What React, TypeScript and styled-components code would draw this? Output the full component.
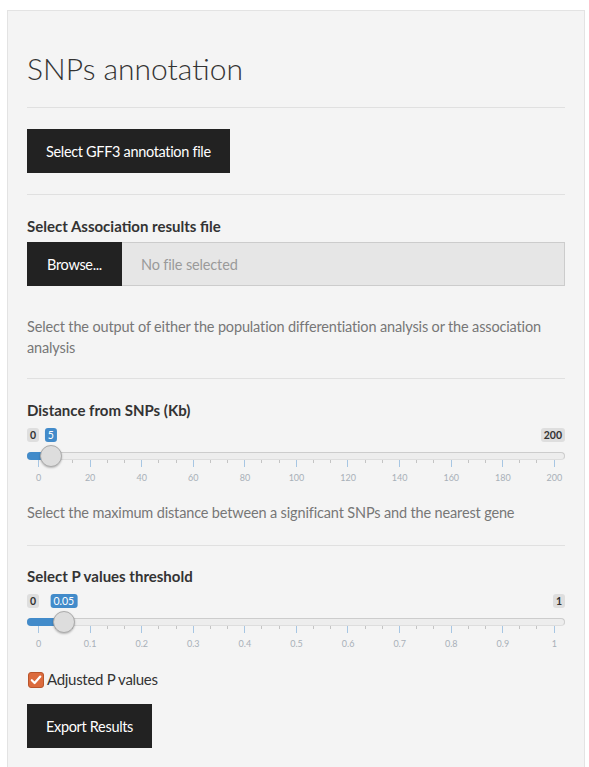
import React from "react";
import styled, { createGlobalStyle } from "styled-components";

const GlobalStyle = createGlobalStyle`
  html, body { margin: 0; padding: 0; background: #ffffff; }
  body { font-family: Lato, "Noto Sans", sans-serif; color: #333333; }
  * { box-sizing: border-box; }
`;

const Page = styled.div`
  padding: 10px 0 0 7px;
  width: 589px;
`;

const Well = styled.div`
  width: 578px;
  min-height: 780px;
  background: #f4f4f4;
  border: 1px solid #e3e3e3;
  padding: 19px;
  display: flex;
  flex-direction: column;
`;

const Title = styled.h2`
  margin: 21px 0 22px 0;
  font-size: 30px;
  line-height: 34px;
  font-weight: 300;
  color: #333333;
`;

const Divider = styled.hr`
  margin: 0;
  border: 0;
  border-top: 1px solid #e0e0e0;
  height: 0;
`;

const Section = styled.div<{ $top: number; $bottom: number }>`
  display: flex;
  flex-direction: column;
  align-items: flex-start;
  padding-top: ${(p) => p.$top}px;
  padding-bottom: ${(p) => p.$bottom}px;
`;

const DarkButton = styled.button`
  display: inline-flex;
  align-items: center;
  justify-content: center;
  height: 44px;
  padding: 0 19px;
  border: 0;
  border-radius: 0;
  background: #222222;
  color: #ffffff;
  font-family: Lato, "Noto Sans", sans-serif;
  font-size: 14.5px;
  letter-spacing: -0.33px;
  cursor: pointer;
`;

const Label = styled.div<{ $gap: number }>`
  align-self: stretch;
  font-size: 15px;
  font-weight: 700;
  line-height: 21px;
  color: #333333;
  margin-bottom: ${(p) => p.$gap}px;
`;

const FileRow = styled.div`
  align-self: stretch;
  display: flex;
  height: 44px;
`;

const BrowseButton = styled(DarkButton)`
  width: 95px;
  padding: 0;
  flex: none;
`;

const FileField = styled.div`
  flex: 1;
  display: flex;
  align-items: center;
  padding-left: 19px;
  background: #e6e6e6;
  border: 1px solid #cccccc;
  border-left: 0;
  color: #9a9a9a;
  font-size: 14.5px;
  letter-spacing: -0.15px;
`;

const Help = styled.div<{ $top: number }>`
  align-self: stretch;
  margin-top: ${(p) => p.$top}px;
  font-size: 14.5px;
  letter-spacing: -0.15px;
  line-height: 21px;
  color: #777777;
`;

/* ---------- slider ---------- */

const SliderRoot = styled.div`
  align-self: stretch;
  display: flex;
  flex-direction: column;
`;

const BadgeRow = styled.div`
  position: relative;
  display: flex;
  justify-content: space-between;
  height: 14px;
`;

const Badge = styled.span<{ $blue?: boolean }>`
  height: 14px;
  padding: 0 3px;
  border-radius: 3px;
  font-size: 10.5px;
  line-height: 14px;
  font-weight: 700;
  background: #dedede;
  color: #333333;
  white-space: nowrap;
`;

const ValueBadge = styled(Badge)`
  position: absolute;
  top: 0;
  transform: translateX(-50%);
  font-weight: 400;
  background: #428bca;
  color: #ffffff;
`;

const Track = styled.div`
  position: relative;
  margin-top: 10px;
  height: 8px;
  border-radius: 4px;
  background: #ededed;
  border: 1px solid #cccccc;
  border-bottom-color: #dddddd;
`;

const Bar = styled.div`
  position: absolute;
  top: -1px;
  left: -1px;
  height: 8px;
  border-radius: 4px 0 0 4px;
  background: #428bca;
`;

const Handle = styled.div`
  position: absolute;
  top: -8px;
  width: 22px;
  height: 22px;
  margin-left: -12px;
  border-radius: 50%;
  background: #dddddd;
  border: 1px solid #ababab;
  box-shadow: 0 1px 2px rgba(0, 0, 0, 0.25);
`;

const TickRow = styled.div`
  display: flex;
  justify-content: space-between;
  align-items: flex-start;
  height: 7px;
  padding: 0 10px 0 11px;
`;

const Tick = styled.span<{ $major: boolean }>`
  width: 1px;
  height: ${(p) => (p.$major ? 7 : 3)}px;
  background: ${(p) => (p.$major ? "#a7c6e3" : "#c4c4c4")};
`;

const LabelRow = styled.div`
  display: flex;
  justify-content: space-between;
  margin-top: 5px;
  padding: 0 10px 0 11px;
  height: 12px;
`;

const TickLabel = styled.span`
  width: 1px;
  display: flex;
  justify-content: center;
  font-size: 9px;
  line-height: 12px;
  color: #a8b0b8;
  white-space: nowrap;
`;

const TRACK_START = 11;
const TRACK_SPAN = 516;

type SliderProps = {
  min: number;
  max: number;
  value: number;
  majors: string[];
};

function Slider({ min, max, value, majors }: SliderProps) {
  const frac = (value - min) / (max - min);
  const x = TRACK_START + frac * TRACK_SPAN;
  const steps = majors.length - 1;
  const ticks = Array.from({ length: steps * 3 + 1 }, (_, i) => i % 3 === 0);
  return (
    <SliderRoot>
      <BadgeRow>
        <Badge>{String(min)}</Badge>
        <Badge>{String(max)}</Badge>
        <ValueBadge style={{ left: x }}>{String(value)}</ValueBadge>
      </BadgeRow>
      <Track>
        <Bar style={{ width: x }} />
        <Handle style={{ left: x }} />
      </Track>
      <TickRow>
        {ticks.map((major, i) => (
          <Tick key={i} $major={major} />
        ))}
      </TickRow>
      <LabelRow>
        {majors.map((m) => (
          <TickLabel key={m}>{m}</TickLabel>
        ))}
      </LabelRow>
    </SliderRoot>
  );
}

/* ---------- checkbox ---------- */

const CheckRow = styled.label<{ $top: number }>`
  display: flex;
  align-items: center;
  gap: 3px;
  margin-top: ${(p) => p.$top}px;
  margin-left: 1px;
  font-size: 15px;
  letter-spacing: -0.3px;
  line-height: 21px;
  color: #333333;
`;

const CheckBox = styled.span`
  width: 16px;
  height: 16px;
  border-radius: 3px;
  background: #dc6b3d;
  border: 1px solid #b9552b;
  display: flex;
  align-items: center;
  justify-content: center;
`;

const ExportButton = styled(DarkButton)<{ $top: number }>`
  margin-top: ${(p) => p.$top}px;
`;

export default function App() {
  return (
    <>
      <GlobalStyle />
      <Page>
        <Well>
          <Title>SNPs annotation</Title>
          <Divider />
          <Section $top={21} $bottom={21}>
            <DarkButton>Select GFF3 annotation file</DarkButton>
          </Section>
          <Divider />
          <Section $top={21} $bottom={20}>
            <Label $gap={5}>Select Association results file</Label>
            <FileRow>
              <BrowseButton>Browse...</BrowseButton>
              <FileField>No file selected</FileField>
            </FileRow>
            <Help $top={30}>
              Select the output of either the population differentiation analysis or the
              association analysis
            </Help>
          </Section>
          <Divider />
          <Section $top={21} $bottom={22}>
            <Label $gap={7}>Distance from SNPs (Kb)</Label>
            <Slider
              min={0}
              max={200}
              value={5}
              majors={["0", "20", "40", "60", "80", "100", "120", "140", "160", "180", "200"]}
            />
            <Help $top={18}>
              Select the maximum distance between a significant SNPs and the nearest gene
            </Help>
          </Section>
          <Divider />
          <Section $top={20} $bottom={19}>
            <Label $gap={7}>Select P values threshold</Label>
            <Slider
              min={0}
              max={1}
              value={0.05}
              majors={["0", "0.1", "0.2", "0.3", "0.4", "0.5", "0.6", "0.7", "0.8", "0.9", "1"]}
            />
            <CheckRow $top={19}>
              <CheckBox>
                <svg width="12" height="12" viewBox="0 0 12 12">
                  <path
                    d="M1.8 6.2 L4.6 9 L10.3 2.6"
                    fill="none"
                    stroke="#ffffff"
                    strokeWidth="2.2"
                    strokeLinecap="round"
                    strokeLinejoin="round"
                  />
                </svg>
              </CheckBox>
              Adjusted P values
            </CheckRow>
            <ExportButton $top={14}>Export Results</ExportButton>
          </Section>
        </Well>
      </Page>
    </>
  );
}
